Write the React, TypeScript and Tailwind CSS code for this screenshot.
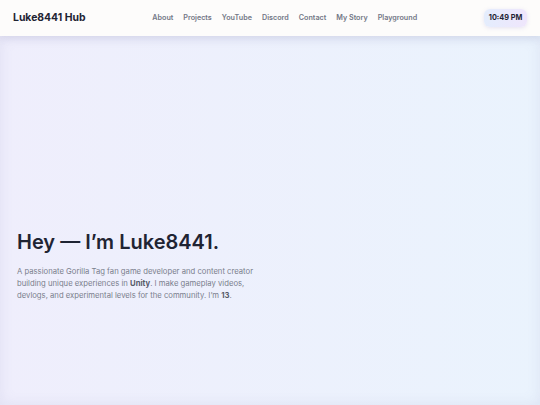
import React from "react";

const font = { fontFamily: "Inter, 'Open Sans', sans-serif" };

export default function App() {
  const links = ["About", "Projects", "YouTube", "Discord", "Contact", "My Story", "Playground"];
  return (
    <div className="w-[540px] h-[405px] overflow-hidden flex flex-col bg-gradient-to-r from-[#efeefc] to-[#eaf3fd]" style={font}>
      <header className="relative z-10 h-[36px] shrink-0 flex items-center justify-between px-[13px] bg-[#fdfcfb] shadow-[0_2px_8px_rgba(80,80,140,0.12)]">
        <div className="text-[10.4px] font-bold text-[#1f2433]">Luke8441 Hub</div>
        <nav className="flex items-center gap-[10px]">
          {links.map((l) => (
            <span key={l} className="text-[7.2px] font-semibold text-[#737786]">{l}</span>
          ))}
        </nav>
        <div className="h-[18px] w-[43px] flex items-center justify-center rounded-[6px] bg-gradient-to-r from-[#e4edfd] to-[#efe6fc] shadow-[0_1px_4px_rgba(120,110,200,0.18)] text-[7.3px] font-bold text-[#1f2433]">
          10:49 PM
        </div>
      </header>
      <main className="flex-1 px-[17px] pt-[192px] shadow-[inset_0_0_14px_rgba(120,120,170,0.12)]">
        <h1 className="text-[20px] font-semibold text-[#1f2433] leading-[28px]">Hey — I’m Luke8441.</h1>
        <p className="mt-[10px] w-[250px] text-[7.7px] leading-[12px] text-[#7a7e8c]">
          A passionate Gorilla Tag fan game developer and content creator building unique experiences in{" "}
          <span className="font-bold text-[#555a68]">Unity</span>. I make gameplay videos, devlogs, and experimental levels for the community. I’m{" "}
          <span className="font-bold text-[#555a68]">13</span>.
        </p>
      </main>
    </div>
  );
}
